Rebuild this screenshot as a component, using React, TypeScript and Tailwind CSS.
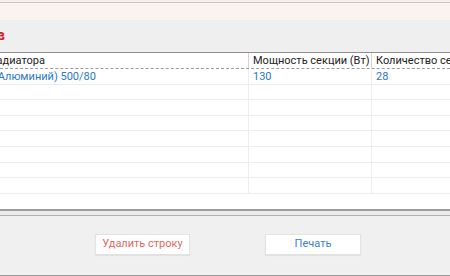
const font = "font-['Roboto','Liberation_Sans',sans-serif]";

const rows = [
  { name: 'Радиатор (Алюминий) 500/80', power: '130', count: '28' },
  { name: '', power: '', count: '' },
  { name: '', power: '', count: '' },
  { name: '', power: '', count: '' },
  { name: '', power: '', count: '' },
  { name: '', power: '', count: '' },
  { name: '', power: '', count: '' },
  { name: '', power: '', count: '' },
];

export default function App() {
  return (
    <div className={`w-[450px] h-[276px] overflow-hidden flex flex-col bg-[#f0f0f0] text-[11px] ${font}`}>
      {/* cut-off strip above */}
      <div className="h-[3px] overflow-hidden bg-[#f4efec] border-b border-[#cdc8c4]">
        <div className="-mt-[14px] flex text-[11px] text-[#777]">
          <span className="ml-[42px]">ру (ру)</span>
          <span className="ml-[270px]">ру</span>
        </div>
      </div>

      {/* notice area */}
      <div className="h-[17px] bg-[#fbf3ee]" />

      {/* title */}
      <div className="h-[32px] bg-[#efefef] flex items-center overflow-hidden">
        <span className="-ml-[3px] -mt-[2px] text-[14px] font-bold text-[#d0202a]">в</span>
      </div>

      {/* table */}
      <div className="h-[157px] bg-white border-t border-[#8f8f8f] flex flex-col overflow-hidden">
        <div className="flex h-[16px] shrink-0 border-b border-dashed border-[#9a9a9a] text-[#222]">
          <div className="w-[249px] shrink-0 overflow-hidden whitespace-nowrap border-r border-[#d4d4d4] leading-[16px]">
            <span className="inline-block -ml-[31px]">Тип радиатора</span>
          </div>
          <div className="w-[123px] shrink-0 border-r border-[#d4d4d4] pl-[4px] leading-[16px] whitespace-nowrap">
            Мощность секции (Вт)
          </div>
          <div className="flex-1 pl-[4px] leading-[16px] whitespace-nowrap overflow-hidden">
            Количество секций
          </div>
        </div>
        {rows.map((r, i) => (
          <div key={i} className="flex h-[15.6px] shrink-0 border-b border-[#ececec] text-[#2b78c8]">
            <div className="w-[249px] shrink-0 overflow-hidden whitespace-nowrap border-r border-[#ededed] leading-[15px]">
              {r.name && <span className="inline-block -ml-[58px]">{r.name}</span>}
            </div>
            <div className="w-[123px] shrink-0 border-r border-[#ededed] pl-[4px] leading-[15px]">{r.power}</div>
            <div className="flex-1 pl-[4px] leading-[15px]">{r.count}</div>
          </div>
        ))}
      </div>

      {/* scrollbar strip */}
      <div className="h-[7px] bg-[#ebebeb] border-t-2 border-b border-t-[#9d9d9d] border-b-[#b0b0b0]" />

      {/* buttons */}
      <div className="flex-1 flex items-center gap-[75px] pl-[95px] pb-[2px] border-b border-[#9a9a9a]">
        <button className="w-[95px] h-[21px] bg-white border border-[#e2e2e2] shadow-[0_1px_1px_rgba(0,0,0,0.06)] text-[#e2675f] text-[11px]">
          Удалить строку
        </button>
        <button className="w-[96px] h-[21px] bg-white border border-[#e2e2e2] shadow-[0_1px_1px_rgba(0,0,0,0.06)] text-[#3a80cf] text-[11px]">
          Печать
        </button>
      </div>
    </div>
  );
}
